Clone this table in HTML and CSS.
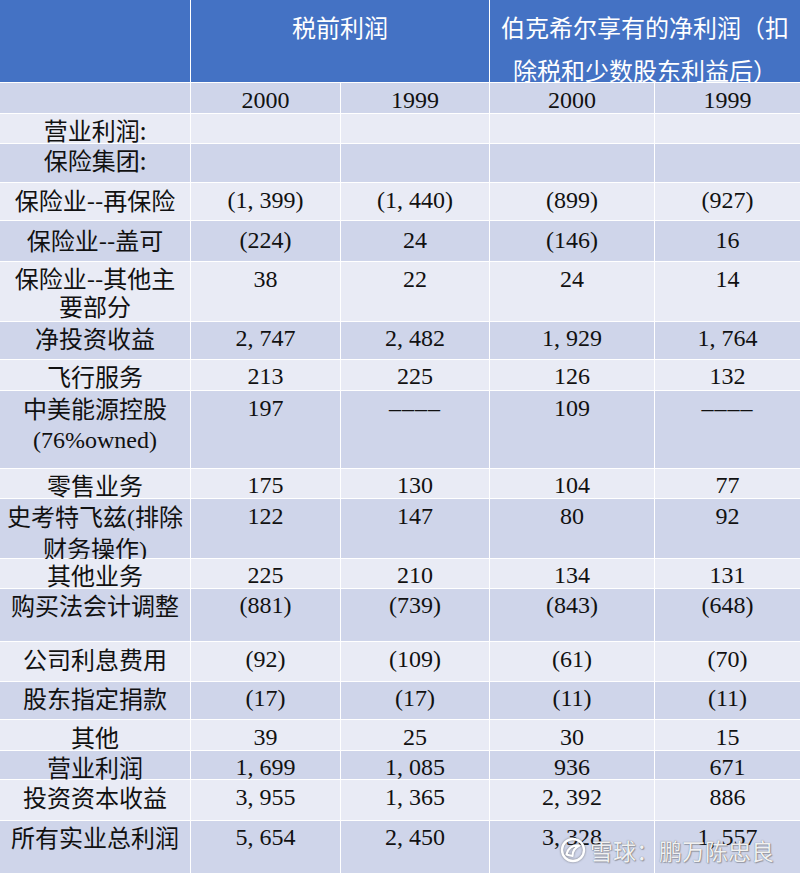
FILE: index.html
```html
<!DOCTYPE html>
<html lang="zh">
<head>
<meta charset="utf-8">
<title>利润表</title>
<link rel="stylesheet" href="styles.css">
</head>
<body>
<div class="page">
  <div class="grid">
    <div class="c hd"></div>
    <div class="c hd span2 ht1">税前利润</div>
    <div class="c hd span2 ht2">伯克希尔享有的净利润（扣除税和少数股东利益后）</div>

    <div class="c d yr"></div><div class="c d yr n">2000</div><div class="c d yr n">1999</div><div class="c d yr n">2000</div><div class="c d yr n">1999</div>

    <div class="c l">营业利润:</div><div class="c l"></div><div class="c l"></div><div class="c l"></div><div class="c l"></div>

    <div class="c d">保险集团:</div><div class="c d"></div><div class="c d"></div><div class="c d"></div><div class="c d"></div>

    <div class="c l p2">保险业--再保险</div><div class="c l n p2">(1, 399)</div><div class="c l n p2">(1, 440)</div><div class="c l n p2">(899)</div><div class="c l n p2">(927)</div>

    <div class="c d p4">保险业--盖可</div><div class="c d n p4">(224)</div><div class="c d n p4">24</div><div class="c d n p4">(146)</div><div class="c d n p4">16</div>

    <div class="c l lh28 p2">保险业--其他主<br>要部分</div><div class="c l n p2">38</div><div class="c l n p2">22</div><div class="c l n p2">24</div><div class="c l n p2">14</div>

    <div class="c d">净投资收益</div><div class="c d n">2, 747</div><div class="c d n">2, 482</div><div class="c d n">1, 929</div><div class="c d n">1, 764</div>

    <div class="c l">飞行服务</div><div class="c l n">213</div><div class="c l n">225</div><div class="c l n">126</div><div class="c l n">132</div>

    <div class="c d p2">中美能源控股<br><span class="lat">(76%owned)</span></div><div class="c d n p2">197</div><div class="c d n p2 dash">––––</div><div class="c d n p2">109</div><div class="c d n p2 dash">––––</div>

    <div class="c l">零售业务</div><div class="c l n">175</div><div class="c l n">130</div><div class="c l n">104</div><div class="c l n">77</div>

    <div class="c d p2">史考特飞兹<span class="lat">(</span>排除<br>财务操作<span class="lat">)</span></div><div class="c d n p2">122</div><div class="c d n p2">147</div><div class="c d n p2">80</div><div class="c d n p2">92</div>

    <div class="c l">其他业务</div><div class="c l n">225</div><div class="c l n">210</div><div class="c l n">134</div><div class="c l n">131</div>

    <div class="c d">购买法会计调整</div><div class="c d n">(881)</div><div class="c d n">(739)</div><div class="c d n">(843)</div><div class="c d n">(648)</div>

    <div class="c l p2">公司利息费用</div><div class="c l n p2">(92)</div><div class="c l n p2">(109)</div><div class="c l n p2">(61)</div><div class="c l n p2">(70)</div>

    <div class="c d">股东指定捐款</div><div class="c d n">(17)</div><div class="c d n">(17)</div><div class="c d n">(11)</div><div class="c d n">(11)</div>

    <div class="c l p2">其他</div><div class="c l n p2">39</div><div class="c l n p2">25</div><div class="c l n p2">30</div><div class="c l n p2">15</div>

    <div class="c d">营业利润</div><div class="c d n">1, 699</div><div class="c d n">1, 085</div><div class="c d n">936</div><div class="c d n">671</div>

    <div class="c l p2">投资资本收益</div><div class="c l n p2">3, 955</div><div class="c l n p2">1, 365</div><div class="c l n p2">2, 392</div><div class="c l n p2">886</div>

    <div class="c d">所有实业总利润</div><div class="c d n">5, 654</div><div class="c d n">2, 450</div><div class="c d n">3, 328</div><div class="c d n">1, 557</div>
  </div>

  <div class="wm">
    <svg class="wm-logo" viewBox="0 0 26 26" width="26" height="26" aria-hidden="true">
      <circle cx="13" cy="13" r="11" fill="none" stroke="#ffffff" stroke-width="2.4"/>
      <path d="M6.5 17.5 C8 11 13 8 19.5 8.5 C15 10.5 12.5 14 12.5 19 C10.5 18.5 8.5 18.2 6.5 17.5 Z" fill="none" stroke="#ffffff" stroke-width="2.2" stroke-linejoin="round"/>
    </svg>
    <span class="wm-text">雪球：鹏万陈忠良</span>
  </div>
</div>
</body>
</html>
```

FILE: styles.css
```css
html, body {
  margin: 0;
  padding: 0;
  background: #ffffff;
}

.page {
  position: relative;
  width: 800px;
  height: 873px;
  overflow: hidden;
}

.grid {
  display: grid;
  grid-template-columns: 190px 149px 148px 164px 145px;
  grid-template-rows: 82px 30px 29px 38px 37px 40px 59px 37px 30px 77px 29px 59px 29px 52px 39px 37px 30px 28px 40px 52px;
  gap: 1px;
  background: #ffffff;
  width: 800px;
  height: 873px;
}

.c {
  font-family: "Noto Sans CJK SC", "Noto Sans", sans-serif;
  font-size: 24px;
  line-height: 30px;
  color: #111111;
  text-align: center;
  padding-top: 1px;
  box-sizing: border-box;
  overflow: visible;
  white-space: nowrap;
}

.hd {
  background: #4472c4;
  color: #ffffff;
  line-height: 43px;
  padding-top: 5px;
}

.span2 {
  grid-column: span 2;
}

.ht1 {
  padding-left: 0;
}

.ht2 {
  white-space: normal;
  padding: 5px 8px 0 8px;
}

.d {
  background: #cfd5ea;
}

.l {
  background: #e9ebf5;
}

.yr {
  padding-top: 2px;
}

.n {
  font-family: "Liberation Serif", "Times New Roman", serif;
}

.lat {
  font-family: "Liberation Serif", "Times New Roman", serif;
}

.dash {
  letter-spacing: 1px;
}

.lh28 {
  line-height: 28px;
}

.p2 {
  padding-top: 2px;
}

.p4 {
  padding-top: 4px;
}

.wm {
  position: absolute;
  left: 560px;
  top: 836px;
  display: flex;
  align-items: center;
  gap: 4px;
  color: rgba(255, 255, 255, 0.92);
}

.wm-logo {
  display: block;
  filter: drop-shadow(0 0 1px rgba(60, 60, 60, 0.6));
}

.wm-text {
  font-family: "Noto Sans CJK SC", "Noto Sans", sans-serif;
  font-size: 23px;
  line-height: 28px;
  text-shadow: 0 0 1px rgba(60, 60, 60, 0.7), 1px 1px 1px rgba(60, 60, 60, 0.35);
}
```
